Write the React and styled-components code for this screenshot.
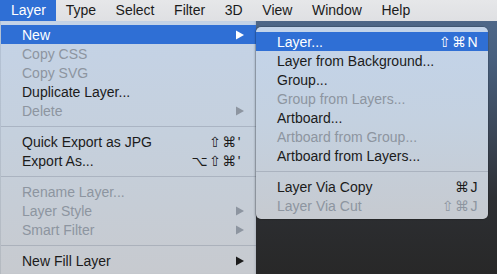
import React from "react";
import styled, { createGlobalStyle, css } from "styled-components";

const GlobalStyle = createGlobalStyle`
  html, body {
    margin: 0;
    padding: 0;
    background: #2a2a2a;
  }
  body {
    font-family: "Liberation Sans", Arial, "DejaVu Sans", sans-serif;
    -webkit-font-smoothing: antialiased;
  }
`;

const BLUE = "#2f6fd5";

const barItems = ["Layer", "Type", "Select", "Filter", "3D", "View", "Window", "Help"];

const layerMenu = [
  { label: "New", active: true, sub: true },
  { label: "Copy CSS", disabled: true },
  { label: "Copy SVG", disabled: true },
  { label: "Duplicate Layer..." },
  { label: "Delete", disabled: true, sub: true },
  "sep",
  { label: "Quick Export as JPG", keys: "⇧⌘'" },
  { label: "Export As...", keys: "⌥⇧⌘'" },
  "sep",
  { label: "Rename Layer...", disabled: true },
  { label: "Layer Style", disabled: true, sub: true },
  { label: "Smart Filter", disabled: true, sub: true },
  "sep",
  { label: "New Fill Layer", sub: true },
];

const newMenu = [
  { label: "Layer...", active: true, keys: "⇧⌘N" },
  { label: "Layer from Background..." },
  { label: "Group..." },
  { label: "Group from Layers...", disabled: true },
  { label: "Artboard..." },
  { label: "Artboard from Group...", disabled: true },
  { label: "Artboard from Layers..." },
  "sep",
  { label: "Layer Via Copy", keys: "⌘J" },
  { label: "Layer Via Cut", disabled: true, keys: "⇧⌘J" },
];

const Screen = styled.div`
  width: 497px;
  height: 274px;
  overflow: hidden;
  display: flex;
  flex-direction: column;
  background: #2a2a2a;
`;

const MenuBar = styled.nav`
  height: 21px;
  flex: none;
  display: flex;
  background: linear-gradient(180deg, #e6e7e9 0%, #dfe0e3 100%);
`;

const BarItem = styled.div`
  padding: 0 9.8px;
  line-height: 21px;
  font-size: 14px;
  color: #1b1b1b;
  &:first-child {
    padding-left: 11px;
  }
  ${({ $active }) =>
    $active &&
    css`
      background: ${BLUE};
      color: #fff;
    `}
`;

const Workspace = styled.div`
  flex: 1;
  display: flex;
  align-items: flex-start;
  background: linear-gradient(
    180deg,
    #4e6788 0%,
    #48607f 14%,
    #3b4656 45%,
    #2d2f33 70%,
    #282828 100%
  );
`;

const Panel = styled.div`
  flex: none;
  display: flex;
  flex-direction: column;
`;

const Item = styled.div`
  height: 19px;
  display: flex;
  align-items: center;
  justify-content: space-between;
  font-size: 14px;
  color: #1b1b1b;
  white-space: nowrap;
  ${({ $disabled }) =>
    $disabled &&
    css`
      color: #8d95a0;
    `}
  ${({ $active }) =>
    $active &&
    css`
      background: ${BLUE};
      color: #fff;
    `}
`;

const MainMenu = styled(Panel)`
  width: 256px;
  align-self: stretch;
  padding-top: 4px;
  background: linear-gradient(180deg, #c4d3e7 0%, #c5d0dd 45%, #c7cacf 100%);
  border-left: 1px solid rgba(60, 70, 90, 0.12);
  box-sizing: border-box;
  box-shadow: inset -2px 0 2px -1px rgba(60, 75, 100, 0.18);

  ${Item} {
    padding: 0 12px 0 21px;
  }
`;

const SubMenu = styled(Panel)`
  width: 232px;
  margin-top: 6px;
  padding: 5px 0 4px;
  border-radius: 5px;
  overflow: hidden;
  background: linear-gradient(180deg, #c3d4ea 0%, #c4d1e0 50%, #c6cad0 100%);
  box-shadow: -1px 0 2px rgba(0, 0, 0, 0.18), 0 0 0 0.5px rgba(0, 0, 0, 0.2);

  ${Item} {
    padding: 0 10px 0 21px;
  }
`;

const Keys = styled.span`
  font-family: "Liberation Sans", "DejaVu Sans", sans-serif;
  font-size: 14px;
  letter-spacing: 1.5px;
  margin-right: ${({ $inset }) => $inset}px;
`;

const Separator = styled.div`
  height: 12px;
  display: flex;
  align-items: center;
  &::after {
    content: "";
    flex: 1;
    height: 1px;
    background: rgba(120, 130, 145, 0.35);
  }
`;

const Arrow = () => (
  <svg width="8" height="10" viewBox="0 0 8 10">
    <polygon points="0,0.5 8,5 0,9.5" fill="currentColor" />
  </svg>
);

const MenuEntries = ({ items, keyInset }) =>
  items.map((it, i) =>
    it === "sep" ? (
      <Separator key={i} />
    ) : (
      <Item key={i} $disabled={it.disabled} $active={it.active}>
        <span>{it.label}</span>
        {it.keys && <Keys $inset={keyInset}>{it.keys}</Keys>}
        {it.sub && <Arrow />}
      </Item>
    )
  );

export default function App() {
  return (
    <>
      <GlobalStyle />
      <Screen>
        <MenuBar>
          {barItems.map((b, i) => (
            <BarItem key={b} $active={i === 0}>
              {b}
            </BarItem>
          ))}
        </MenuBar>
        <Workspace>
          <MainMenu>
            <MenuEntries items={layerMenu} keyInset={2} />
          </MainMenu>
          <SubMenu>
            <MenuEntries items={newMenu} keyInset={-1} />
          </SubMenu>
        </Workspace>
      </Screen>
    </>
  );
}
